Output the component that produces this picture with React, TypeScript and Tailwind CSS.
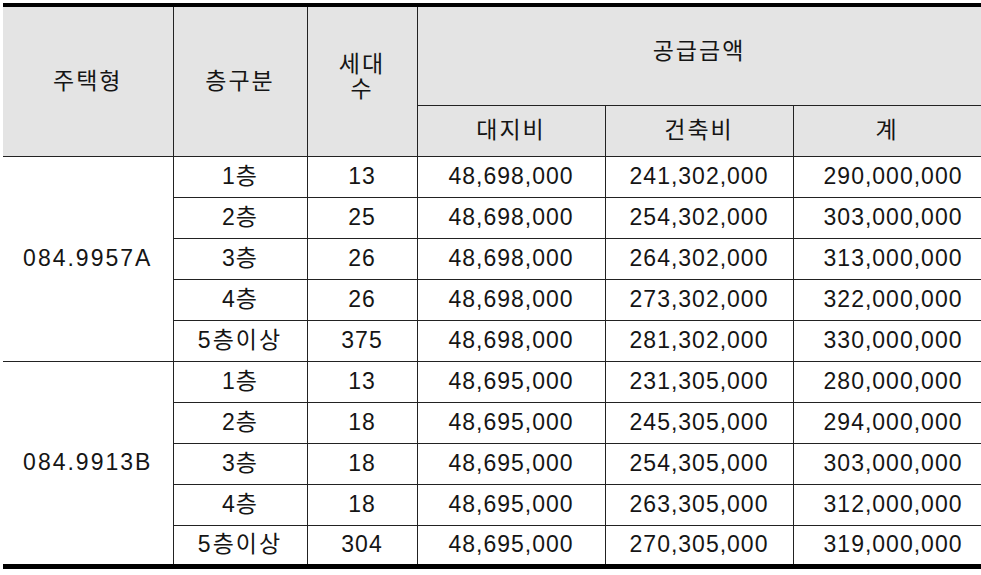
const groups = [
  {
    type: "084.9957A",
    rows: [
      ["1층", "13", "48,698,000", "241,302,000", "290,000,000"],
      ["2층", "25", "48,698,000", "254,302,000", "303,000,000"],
      ["3층", "26", "48,698,000", "264,302,000", "313,000,000"],
      ["4층", "26", "48,698,000", "273,302,000", "322,000,000"],
      ["5층이상", "375", "48,698,000", "281,302,000", "330,000,000"],
    ],
  },
  {
    type: "084.9913B",
    rows: [
      ["1층", "13", "48,695,000", "231,305,000", "280,000,000"],
      ["2층", "18", "48,695,000", "245,305,000", "294,000,000"],
      ["3층", "18", "48,695,000", "254,305,000", "303,000,000"],
      ["4층", "18", "48,695,000", "263,305,000", "312,000,000"],
      ["5층이상", "304", "48,695,000", "270,305,000", "319,000,000"],
    ],
  },
];

const font = "font-['Liberation_Sans','Noto_Sans_CJK_KR',sans-serif]";
const head = "bg-[#e4e4e4] border border-[#222] text-center align-middle font-normal text-[23px] tracking-[2px]";
const cell = "border border-[#222] text-center align-middle text-[23px] tracking-[1px] h-[41px] p-0";

export default function App() {
  return (
    <div className={`w-[981px] h-[575px] bg-white pt-[3px] pl-[3px] text-[#151515] ${font}`}>
      <table className="table-fixed border-collapse w-[978px] border-t-4 border-b-[5px] border-t-black border-b-black">
        <colgroup>
          <col className="w-[170px]" />
          <col className="w-[134px]" />
          <col className="w-[110px]" />
          <col className="w-[188px]" />
          <col className="w-[188px]" />
          <col className="w-[188px]" />
        </colgroup>
        <thead>
          <tr className="h-[100px]">
            <th rowSpan={2} className={`${head} border-l-0 border-t-black`}>주택형</th>
            <th rowSpan={2} className={`${head} border-t-black`}>층구분</th>
            <th rowSpan={2} className={`${head} border-t-black leading-[25px] pb-[8px]`}>
              세대
              <br />수
            </th>
            <th colSpan={3} className={`${head} border-t-black border-r-[#888] pb-[10px]`}>공급금액</th>
          </tr>
          <tr className="h-[51px]">
            <th className={head}>대지비</th>
            <th className={head}>건축비</th>
            <th className={`${head} border-r-[#888]`}>계</th>
          </tr>
        </thead>
        <tbody>
          {groups.map((g) =>
            g.rows.map((r, i) => (
              <tr key={g.type + i}>
                {i === 0 && (
                  <td rowSpan={5} className={`${cell} border-l-0 tracking-[2px]`}>
                    {g.type}
                  </td>
                )}
                <td className={`${cell} ${r[0].length > 2 ? "tracking-[2px]" : ""}`}>{r[0]}</td>
                <td className={cell}>{r[1]}</td>
                <td className={cell}>{r[2]}</td>
                <td className={cell}>{r[3]}</td>
                <td className={`${cell} border-r-[#888] pl-[12px]`}>{r[4]}</td>
              </tr>
            ))
          )}
        </tbody>
      </table>
    </div>
  );
}
